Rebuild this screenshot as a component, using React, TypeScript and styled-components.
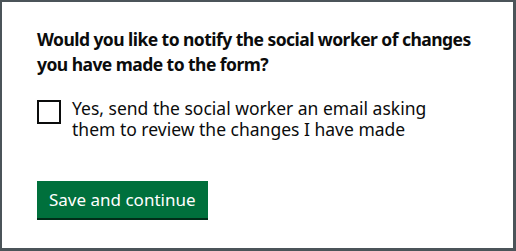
import styled, { createGlobalStyle } from "styled-components"

const GlobalStyle = createGlobalStyle`
    html, body {
        margin: 0;
        padding: 0;
        background: #4b5459;
    }
    * {
        box-sizing: border-box;
    }
`

const Frame = styled.div`
    width: 516px;
    height: 251px;
    border-style: solid;
    border-color: #4b5459;
    border-width: 2px 3px 3px 2px;
    background: #ffffff;
    padding: 25px 35px 0 35px;
    font-family: "Noto Sans", "Liberation Sans", sans-serif;
    color: #0b0c0c;
`

const Legend = styled.h2`
    margin: 0 -14px 21px 0;
    font-size: 17.5px;
    line-height: 25px;
    font-weight: 700;
    letter-spacing: -0.55px;
`

const CheckRow = styled.label`
    display: flex;
    align-items: flex-start;
    gap: 11px;
    margin-bottom: 42px;
    cursor: pointer;
`

const Box = styled.span`
    flex: none;
    width: 24px;
    height: 24px;
    border: 2px solid #0b0c0c;
    background: #ffffff;
    margin-top: 2px;
`

const Label = styled.span`
    max-width: 370px;
    font-size: 17.5px;
    line-height: 20.5px;
    font-weight: 400;
`

const Button = styled.button`
    display: inline-block;
    font-family: inherit;
    font-size: 17px;
    line-height: 20px;
    font-weight: 400;
    color: #ffffff;
    background: #00703c;
    border: 0;
    border-radius: 0;
    padding: 9px 12px 8px;
    box-shadow: 0 2px 0 #002d18;
    cursor: pointer;
`

const App = () => {
    return(
        <>
            <GlobalStyle />
            <Frame>
                <Legend>Would you like to notify the social worker of changes you have made to the form?</Legend>
                <CheckRow>
                    <Box />
                    <Label>Yes, send the social worker an email asking them to review the changes I have made</Label>
                </CheckRow>
                <Button>Save and continue</Button>
            </Frame>
        </>
    )
}

export default App
